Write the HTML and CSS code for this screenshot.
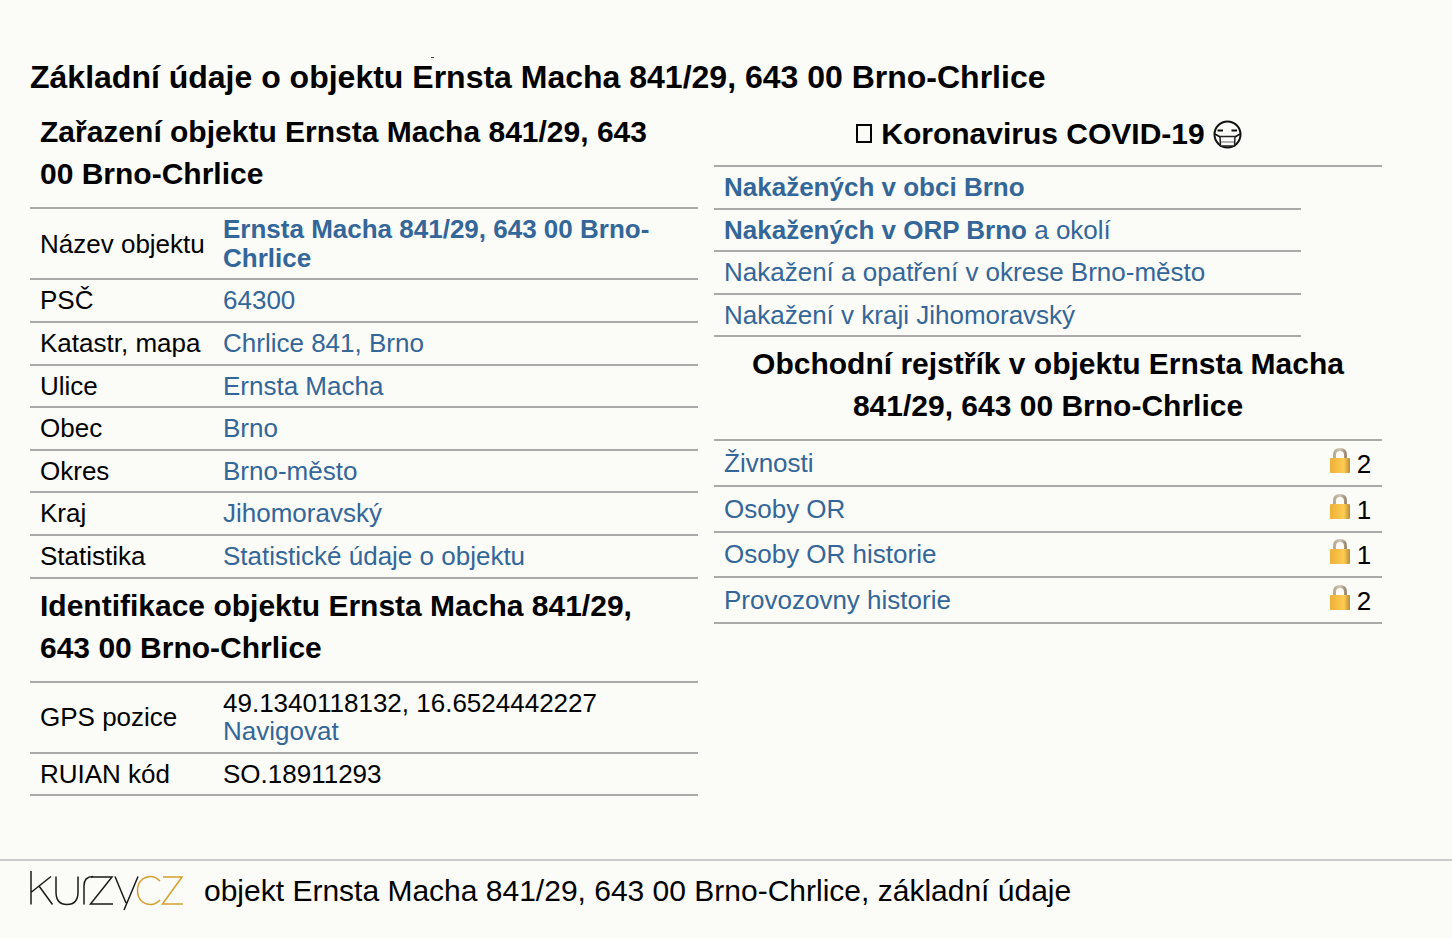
FILE: index.html
```html
<!DOCTYPE html>
<html lang="cs">
<head>
<meta charset="utf-8">
<title>Základní údaje o objektu</title>
<link rel="stylesheet" href="styles.css">
</head>
<body>
<main class="page">
<h1 class="title">Základní údaje o objektu Ernsta Macha 841/29, 643 00 Brno-Chrlice<span class="speck"></span></h1>
<div class="columns">
<section class="col">
<h2 class="head">Zařazení objektu Ernsta Macha 841/29, 643 00 Brno-Chrlice</h2>
<div class="rows">
<div class="row"><span class="key">Název objektu</span><span class="val"><a href="#"><b>Ernsta Macha 841/29, 643 00 Brno-Chrlice</b></a></span></div>
<div class="row"><span class="key">PSČ</span><span class="val"><a href="#">64300</a></span></div>
<div class="row"><span class="key">Katastr, mapa</span><span class="val"><a href="#">Chrlice 841, Brno</a></span></div>
<div class="row"><span class="key">Ulice</span><span class="val"><a href="#">Ernsta Macha</a></span></div>
<div class="row"><span class="key">Obec</span><span class="val"><a href="#">Brno</a></span></div>
<div class="row"><span class="key">Okres</span><span class="val"><a href="#">Brno-město</a></span></div>
<div class="row"><span class="key">Kraj</span><span class="val"><a href="#">Jihomoravský</a></span></div>
<div class="row"><span class="key">Statistika</span><span class="val"><a href="#">Statistické údaje o objektu</a></span></div>
</div>
<h2 class="head">Identifikace objektu Ernsta Macha 841/29, 643 00 Brno-Chrlice</h2>
<div class="rows">
<div class="row"><span class="key">GPS pozice</span><span class="val">49.1340118132, 16.6524442227<br><a href="#">Navigovat</a></span></div>
<div class="row"><span class="key">RUIAN kód</span><span class="val">SO.18911293</span></div>
</div>
</section>
<section class="col">
<h2 class="head head-center head-covid"><span class="tofu"></span> Koronavirus COVID-19 <svg class="mask" viewBox="0 0 29 29" role="img" aria-label="😷"><circle cx="14.500" cy="14.500" r="13" fill="#fbfbf7" stroke="#111" stroke-width="2"/><path d="M4.500 10.500H10M18.500 10.500H24" stroke="#111" stroke-width="2"/><path d="M2 14L7 17M27 14L22 17" stroke="#111" stroke-width="1.500"/><path d="M7 16.500H22L21.500 26H7.500Z" fill="#fbfbf7" stroke="#222" stroke-width="1.500"/><path d="M8 22H21" stroke="#999" stroke-width="1.500"/></svg></h2>
<div class="rows covid">
<div class="row"><a href="#"><b>Nakažených v obci Brno</b></a></div>
<div class="row"><a href="#"><b>Nakažených v ORP Brno</b> a okolí</a></div>
<div class="row"><a href="#">Nakažení a opatření v okrese Brno-město</a></div>
<div class="row"><a href="#">Nakažení v kraji Jihomoravský</a></div>
</div>
<h2 class="head head-center">Obchodní rejstřík v objektu Ernsta Macha 841/29, 643 00 Brno-Chrlice</h2>
<div class="rows register">
<div class="row"><a href="#">Živnosti</a><span class="count"><svg class="lock" viewBox="0 0 20 25"><use href="#lock-shape"/></svg><span class="num">2</span></span></div>
<div class="row"><a href="#">Osoby OR</a><span class="count"><svg class="lock" viewBox="0 0 20 25"><use href="#lock-shape"/></svg><span class="num">1</span></span></div>
<div class="row"><a href="#">Osoby OR historie</a><span class="count"><svg class="lock" viewBox="0 0 20 25"><use href="#lock-shape"/></svg><span class="num">1</span></span></div>
<div class="row"><a href="#">Provozovny historie</a><span class="count"><svg class="lock" viewBox="0 0 20 25"><use href="#lock-shape"/></svg><span class="num">2</span></span></div>
</div>
</section>
</div>
</main>
<footer class="foot">
<svg class="logo" viewBox="0 0 153 40" role="img" aria-label="kurzy.cz">
<g fill="none" stroke="#1b1b1b" stroke-width="1.500">
<path d="M1 0V33.500M1.500 21L21 5.500M9 15L22.500 33.500"/>
<path d="M26 5.500V21C26 29 30 33.500 37 33.500C44 33.500 48 29 48 21V5.500"/>
<path d="M54 33.500V15C54 9 57 5.500 63 5.500"/>
<path d="M61 6H82L60.500 33H83"/>
<path d="M85 5.500L96 32M108 5.500L94 39"/>
</g>
<g fill="none" stroke="#d3a02e" stroke-width="1.500">
<path d="M130 10C127 7 124 5.500 121 5.500C113 5.500 107.500 11 107.500 19.500C107.500 28 113 33.500 121 33.500C124 33.500 127 32 130 29"/>
<path d="M133 6H152L132.500 33H153"/>
</g>
</svg>
<span class="foot-text">objekt Ernsta Macha 841/29, 643 00 Brno-Chrlice, základní údaje</span>
</footer>
<svg class="defs" width="0" height="0">
<defs>
<linearGradient id="lock-body" x1="0" y1="0" x2="1" y2="0">
<stop offset="0" stop-color="#eeb03a"/><stop offset=".7" stop-color="#fdcc50"/><stop offset="1" stop-color="#b98a3c"/>
</linearGradient>
<linearGradient id="lock-hoop" x1="0" y1="0" x2="1" y2="0">
<stop offset="0" stop-color="#b8a890"/><stop offset=".5" stop-color="#d2c8b6"/><stop offset="1" stop-color="#9c8b74"/>
</linearGradient>
<g id="lock-shape">
<path d="M4.500 12V7C4.500 3.500 6.500 1.500 10 1.500C13.500 1.500 15.500 3.500 15.500 7V12" fill="none" stroke="url(#lock-hoop)" stroke-width="3"/>
<rect x="0" y="10" width="20" height="15" rx="1" fill="url(#lock-body)"/>
</g>
</defs>
</svg>
</body>
</html>
```
FILE: styles.css
```css
* { box-sizing: border-box; }
html, body { margin: 0; padding: 0; }
body {
  background: #fbfbf7;
  color: #000;
  font-family: "Liberation Sans", Arial, sans-serif;
  font-size: 26px;
  height: 938px;
  overflow: hidden;
}
a { color: #369; text-decoration: none; }
.page { padding: 56px 30px 0; height: 859px; }
.title {
  position: relative;
  margin: 0;
  font-size: 32px;
  line-height: 42px;
}
.speck {
  position: absolute;
  left: 401px;
  top: 1px;
  width: 3px;
  height: 1px;
  background: #345;
}
.columns { display: grid; grid-template-columns: 668px 668px; column-gap: 16px; padding-top: 7.400px; }
.head {
  margin: 0;
  padding: 6px 10px 12px;
  font-size: 30px;
  line-height: 42px;
}
.head-center { text-align: center; }
.head-covid { padding-top: 7.600px; padding-bottom: 10px; border-bottom: 2px solid #aaa; }
.tofu {
  display: inline-block;
  width: 16px;
  height: 19px;
  margin: 0 1px 0 2px;
  border: 2px solid #000;
  vertical-align: 1px;
}
.mask { width: 29px; height: 29px; vertical-align: -5px; }
.rows { border-top: 2px solid #aaa; }
.row {
  display: flex;
  align-items: center;
  padding: 6.100px 10px;
  line-height: 28.400px;
  border-bottom: 2px solid #aaa;
}
.key { flex: 0 0 183px; }
.val { flex: 1; }
.covid { width: 587px; border-top: 0; }
.register .row { justify-content: space-between; padding: 7.600px 10px; }
.count { display: flex; align-items: center; gap: 6px; }
.num { display: block; width: 16px; text-align: center; position: relative; top: 1px; }
.lock { width: 20px; height: 25px; display: block; margin: -1px 0 4px; }
.defs { position: absolute; }
.foot {
  display: flex;
  align-items: center;
  height: 79px;
  padding: 0 0 17px 30px;
  border-top: 2px solid #ccc;
}
.logo { width: 153px; height: 40px; flex: none; }
.foot-text { margin-left: 21px; font-size: 30px; }
```
